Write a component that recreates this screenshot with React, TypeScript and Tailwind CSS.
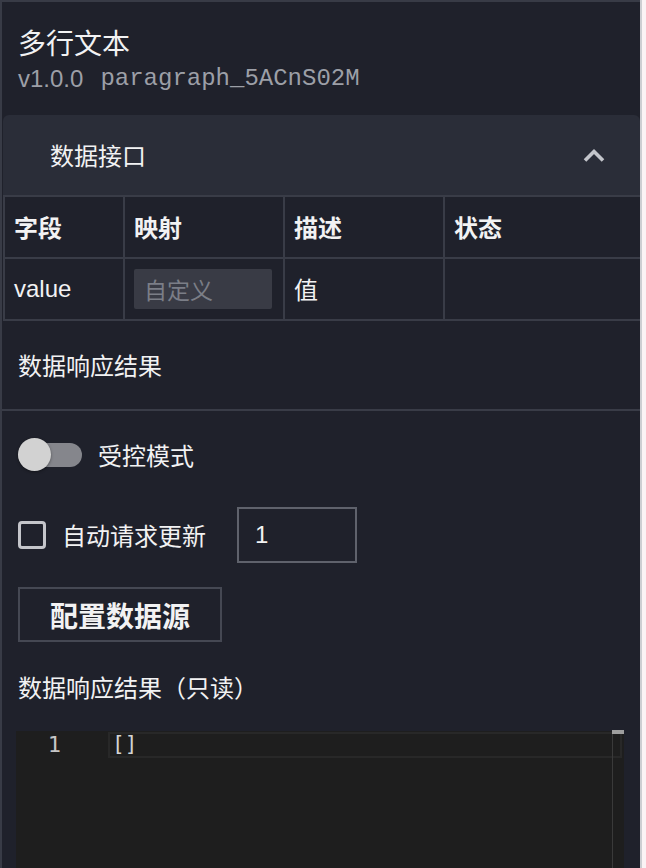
import React from "react";

const CJK = { fontFamily: '"Noto Sans CJK SC", "Noto Sans", sans-serif' };

export default function App() {
  return (
    <div
      className="w-[646px] h-[868px] overflow-hidden flex bg-[#fbf3f5] text-[#f2f2f3]"
      style={CJK}
    >
      <div className="w-[640px] h-full flex flex-col bg-[#1f212b] border-t-2 border-l-2 border-[#383b46]">
        {/* Header */}
        <div className="pl-[16px] pt-[22px] pb-[21px]">
          <div className="text-[28px] leading-[36px]">多行文本</div>
          <div className="mt-[4px] h-[30px] flex items-center text-[#9c9fa7] text-[24px]">
            <span style={{ fontFamily: '"Liberation Sans", Arial, sans-serif' }}>v1.0.0</span>
            <span
              className="ml-[17px]"
              style={{ fontFamily: '"Liberation Mono", "Courier New", monospace' }}
            >
              paragraph_5ACnS02M
            </span>
          </div>
        </div>

        {/* Collapse */}
        <div className="ml-[1px]">
          <div className="h-[80px] rounded-t-[6px] bg-[#2a2d38] flex items-center justify-between pl-[47px] pr-[36px]">
            <span className="text-[24px] leading-[32px]">数据接口</span>
            <svg width="22" height="14" viewBox="0 0 22 14" className="mr-[-1px]">
              <polyline
                points="2,12.5 11,3.5 20,12.5"
                fill="none"
                stroke="#c3c5cb"
                strokeWidth="3.6"
              />
            </svg>
          </div>
          <table className="w-[637px] border-collapse table-fixed text-[24px]">
            <colgroup>
              <col className="w-[120px]" />
              <col className="w-[160px]" />
              <col className="w-[160px]" />
              <col className="w-[197px]" />
            </colgroup>
            <thead>
              <tr className="h-[62px]">
                {["字段", "映射", "描述", "状态"].map((h) => (
                  <th
                    key={h}
                    className="border-2 border-[#393c47] text-left font-bold pl-[9px] leading-[32px]"
                  >
                    {h}
                  </th>
                ))}
              </tr>
            </thead>
            <tbody>
              <tr className="h-[62px]">
                <td
                  className="border-2 border-[#393c47] pl-[9px]"
                  style={{ fontFamily: '"Liberation Sans", Arial, sans-serif' }}
                >
                  value
                </td>
                <td className="border-2 border-[#393c47] pl-[9px]">
                  <div className="w-[138px] h-[40px] bg-[#393b45] rounded-[2px] pl-[10px] flex items-center text-[#7b7e87] text-[23px]">
                    自定义
                  </div>
                </td>
                <td className="border-2 border-[#393c47] pl-[9px]">值</td>
                <td className="border-2 border-[#393c47]"></td>
              </tr>
            </tbody>
          </table>
        </div>

        {/* Response title */}
        <div className="pl-[16px] pt-[28px] pb-[28px] border-b-2 border-[#393c47]">
          <div className="text-[24px] leading-[32px]">数据响应结果</div>
        </div>

        {/* Controls */}
        <div className="pl-[16px] flex flex-col">
          <div className="mt-[27px] h-[34px] flex items-center">
            <div className="relative w-[64px] h-[34px] flex items-center">
              <div className="w-[64px] h-[24px] rounded-full bg-[#85868c]" />
              <div className="absolute left-0 top-0 w-[33px] h-[33px] rounded-full bg-[#d2d2d2] shadow-[0_1px_3px_rgba(0,0,0,0.4)]" />
            </div>
            <span className="ml-[16px] text-[24px] leading-[32px]">受控模式</span>
          </div>

          <div className="mt-[35px] h-[56px] flex items-center">
            <div className="w-[28px] h-[28px] rounded-[4px] border-[3px] border-[#c4c5ca]" />
            <span className="ml-[16px] text-[24px] leading-[32px]">自动请求更新</span>
            <div
              className="ml-[31px] w-[120px] h-[56px] border-2 border-[#5f626c] flex items-center pl-[16px] text-[24px]"
              style={{ fontFamily: '"Liberation Sans", Arial, sans-serif' }}
            >
              1
            </div>
          </div>

          <div className="mt-[24px] w-[204px] h-[55px] border-2 border-[#454853] flex items-center justify-center text-[28px] font-bold">
            配置数据源
          </div>

          <div className="mt-[29px] text-[24px] leading-[32px]">数据响应结果（只读）</div>

          {/* Editor */}
          <div
            className="relative mt-[28px] ml-[-2px] w-[608px] h-[200px] bg-[#1e1e1e] flex"
            style={{ fontFamily: '"DejaVu Sans Mono", "Liberation Mono", monospace' }}
          >
            <div className="w-[92px] shrink-0">
              <div className="mt-[1px] w-[45px] h-[26px] leading-[26px] text-right text-[22px] text-[#c6c6c6]">
                1
              </div>
            </div>
            <div className="flex-1">
              <div className="mt-[1px] mr-[2px] h-[26px] border-2 border-[#282828] pl-[2px] flex items-center text-[21px] text-[#d4d4d4]">
                []
              </div>
            </div>
            <div className="absolute left-[596px] top-0 bottom-0 w-px bg-[#3a3a3a]" />
            <div className="absolute left-[596px] top-[-1px] w-[12px] h-[4px] bg-[#9e9e9e]" />
          </div>
        </div>
      </div>
      <div className="w-[2px] h-full bg-[#cdced2]" />
    </div>
  );
}
